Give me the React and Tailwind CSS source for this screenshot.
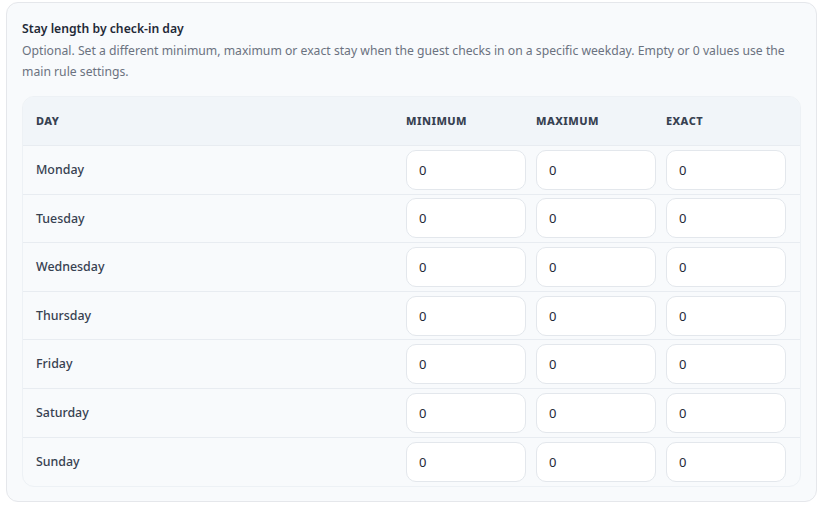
const days = ["Monday", "Tuesday", "Wednesday", "Thursday", "Friday", "Saturday", "Sunday"];

const columns = ["Minimum", "Maximum", "Exact"];

const NumberCell = ({ value }) => (
  <input
    type="text"
    defaultValue={value}
    className="w-[120px] h-10 rounded-[10px] border border-[#e3e7ec] bg-white px-3 text-[13px] text-[#1f2937] outline-none"
  />
);

export default function App() {
  return (
    <div className="min-h-screen bg-white px-[6px] pt-[2px] font-['Noto_Sans',sans-serif]">
      <div className="w-[811px] rounded-[12px] border border-[#e5e7eb] bg-[#f8fafc] px-[15px] pt-[16px] pb-[14px]">
        <h3 className="text-[12.2px] leading-[20px] font-semibold text-[#1f2937]">
          Stay length by check-in day
        </h3>
        <p className="mt-[1px] text-[12.2px] leading-[21px] text-[#6b7280]">
          Optional. Set a different minimum, maximum or exact stay when the guest checks in on a specific weekday.
          Empty or 0 values use the main rule settings.
        </p>

        {/* weekday table */}
        <div className="mt-[14px] overflow-hidden rounded-[12px] border border-[#edf1f5] bg-[#f8fafc]">
          <div className="flex h-[49px] items-center bg-[#f1f5f9] pl-[13px] pr-[14px] border-b border-[#e8ecf1]">
            <div className="flex-1 text-[11px] font-extrabold uppercase tracking-[0.04em] text-[#374151]">Day</div>
            <div className="flex gap-[10px]">
              {columns.map((c) => (
                <div key={c} className="w-[120px] text-[11px] font-extrabold uppercase tracking-[0.04em] text-[#374151]">
                  {c}
                </div>
              ))}
            </div>
          </div>

          {days.map((day, i) => (
            <div
              key={day}
              className={
                "flex h-[48.6px] items-center pl-[13px] pr-[14px]" +
                (i < days.length - 1 ? " border-b border-[#e8ecf1]" : "")
              }
            >
              <div className="flex-1 pt-[1px] text-[12.4px] font-medium text-[#374151]">{day}</div>
              <div className="flex gap-[10px]">
                {columns.map((c) => (
                  <NumberCell key={c} value="0" />
                ))}
              </div>
            </div>
          ))}
        </div>
      </div>
    </div>
  );
}
